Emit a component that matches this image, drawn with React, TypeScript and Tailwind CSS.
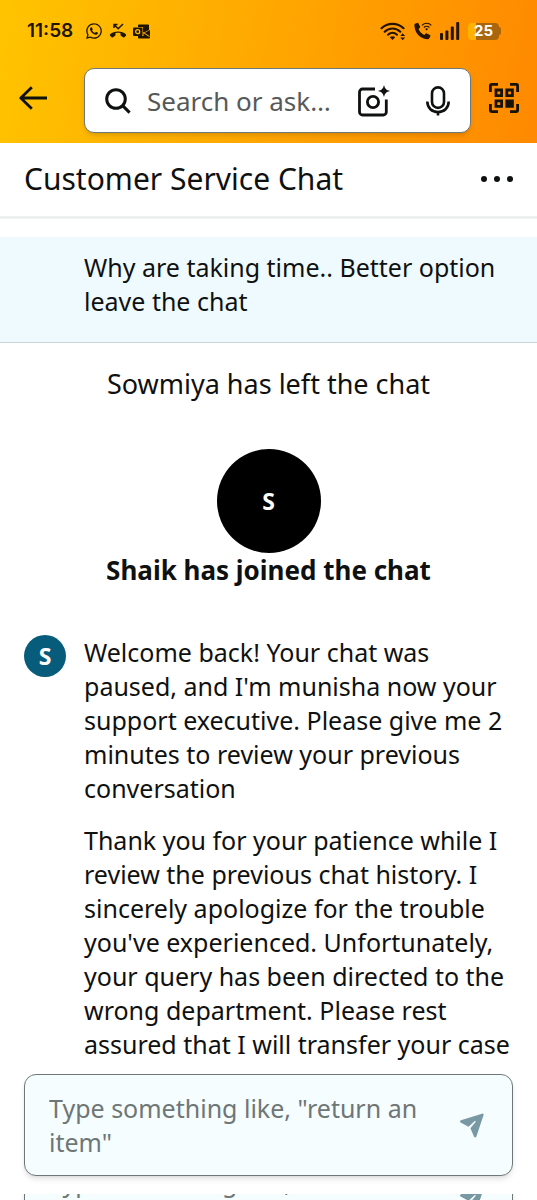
import { useState } from "react";
import { FaWhatsapp } from "react-icons/fa";

const messages = [
  "Welcome back! Your chat was paused, and I'm munisha now your support executive. Please give me 2 minutes to review your previous conversation",
  "Thank you for your patience while I review the previous chat history. I sincerely apologize for the trouble you've experienced. Unfortunately, your query has been directed to the wrong department. Please rest assured that I will transfer your case",
];

const MissedCallIcon = () => (
  <svg width="18" height="16" viewBox="0 0 18 16" fill="none">
    <path
      d="M1.2 11.2C4.8 7.6 13.2 7.6 16.8 11.2c.5.5.5 1 .1 1.5l-1.5 1.5c-.4.4-.9.4-1.3.1l-2.2-1.6c-.3-.3-.4-.6-.4-1V10c-1.6-.5-3.4-.5-5 0v1.7c0 .4-.1.7-.4 1L3.9 14.3c-.4.3-.9.3-1.3-.1L1.1 12.7c-.4-.5-.4-1 .1-1.5Z"
      fill="#201600"
    />
    <path d="M5 5V1.5h3.5M5.2 1.7l4 4L14 1" stroke="#201600" strokeWidth="1.5" />
  </svg>
);

const OutlookIcon = () => (
  <svg width="18" height="15" viewBox="0 0 18 15">
    <path d="M5 1.5C5 1 5.4.5 6 .5h9c.6 0 1 .5 1 1V6l-5 2.5-1-.6V3H5V1.5Z" fill="#201600" />
    <path d="M10.5 9.5 17 6v7.5c0 .6-.4 1-1 1H6c-.6 0-1-.4-1-1V12h5.5V9.5Z" fill="#201600" />
    <path d="m11 9 5.5 3.6" stroke="#ffb900" strokeWidth="1" />
    <rect x="0" y="3.5" width="9.5" height="8.5" rx="1" fill="#201600" />
    <circle cx="4.7" cy="7.7" r="2" fill="none" stroke="#ffb900" strokeWidth="1.3" />
  </svg>
);

const WifiIcon = () => (
  <svg width="26" height="19" viewBox="0 0 26 19" fill="none" stroke="#251500" strokeLinecap="round">
    <path d="M1.5 6.2C7.5.3 17.5.3 23.5 6.2" strokeWidth="2.2" />
    <path d="M4.7 9.7c4.4-4.3 11.2-4.3 15.6 0" strokeWidth="2.2" />
    <path d="M8 12.7c2.7-2.5 6.3-2.5 9 0" strokeWidth="2" />
    <path d="M12.5 18 9.8 15.2c1.5-1.3 3.9-1.3 5.4 0Z" fill="#251500" stroke="none" />
    <path d="m20.3 14 2.4-2.8 2.4 2.8ZM20.3 15.5l2.4 2.8 2.4-2.8Z" fill="#251500" stroke="none" />
  </svg>
);

const WifiCallIcon = () => (
  <svg width="18" height="18" viewBox="0 0 18 18" fill="none">
    <path
      d="M1 1.8 3.2.9c.5-.2 1 0 1.3.5l1.6 3.2c.2.5.1.9-.2 1.2L4.5 7.1c1 2.5 3.1 4.7 5.7 5.9l1.5-1.4c.4-.3.8-.4 1.2-.2l3 1.7c.5.3.6.8.4 1.3l-1.2 2.1c-.3.5-.7.7-1.3.7C6.3 17.1.4 10.8.4 3c0-.6.2-1 .6-1.2Z"
      fill="#251500"
    />
    <path d="M8 3.4c2.6-2.9 6.7-2.9 9.3 0M9.9 5.5c1.5-1.7 4-1.7 5.5 0" stroke="#251500" strokeWidth="1.2" />
    <path d="m12.6 8.6-1.5-1.7c.9-.8 2.1-.8 3 0Z" fill="#251500" />
  </svg>
);

const SignalIcon = () => (
  <svg width="20" height="18" viewBox="0 0 20 18" fill="#251500">
    <rect x="0" y="11" width="3" height="7" rx="1" />
    <rect x="5.4" y="8.5" width="3" height="9.5" rx="1" />
    <rect x="10.8" y="4.5" width="3" height="13.5" rx="1" />
    <rect x="16.2" y="0" width="3" height="18" rx="1" />
  </svg>
);

const BackIcon = () => (
  <svg width="28" height="24" viewBox="0 0 28 24" fill="none" stroke="#0f1111" strokeWidth="2.8">
    <path d="M1.8 12H28M12.8 1.2 1.8 12l11 10.8" strokeLinejoin="round" />
  </svg>
);

const SearchIcon = () => (
  <svg width="26" height="26" viewBox="0 0 26 26" fill="none" stroke="#0f1111" strokeWidth="3">
    <circle cx="11" cy="11" r="9.3" />
    <path d="m17.6 17.6 7 7" />
  </svg>
);

const LensIcon = () => (
  <svg width="32" height="32" viewBox="0 0 32 32" fill="none">
    <path
      d="M17 4H4.5A3 3 0 0 0 1.5 7v20a3 3 0 0 0 3 3h20.8a3 3 0 0 0 3-3V14.500"
      stroke="#0f1111"
      strokeWidth="2.8"
    />
    <circle cx="15" cy="17" r="5.6" stroke="#0f1111" strokeWidth="2.8" />
    <path d="M26 0c1 3.8 2.2 5 6 6-3.8 1-5 2.2-6 6-1-3.8-2.2-5-6-6 3.8-1 5-2.200 6-6Z" fill="#0f1111" />
  </svg>
);

const MicIcon = () => (
  <svg width="24" height="30" viewBox="0 0 24 30" fill="none" stroke="#0f1111" strokeWidth="2.6">
    <rect x="6" y="1.4" width="12" height="20.5" rx="6" />
    <path d="M1.3 15.5C1.3 22 6 26 12 26s10.7-4 10.7-10.5M12 26v3.5" />
  </svg>
);

const ScanIcon = () => (
  <svg width="30" height="30" viewBox="0 0 30 30" fill="none" stroke="#17120a" strokeWidth="2.8">
    <path d="M1.4 9V2.4a1 1 0 0 1 1-1H9M21 1.4h6.6a1 1 0 0 1 1 1V9M28.6 21v6.6a1 1 0 0 1-1 1H21M9 28.6H2.4a1 1 0 0 1-1-1V21" />
    <path d="M7 7h5.6v5.6H7zM17.800 7h5.600v5.600h-5.600zM7 17.800h5.600v5.600H7z" />
    <path d="M17.800 17.800h5.600v5.600h-5.600z" fill="#17120a" />
  </svg>
);

const SendIcon = () => (
  <svg width="24" height="25" viewBox="0 0 24 25">
    <path
      d="M22 .7.9 7.3c-1 .4-1.2 1.6-.3 2.2l7.9 4.3 6.3-5.7c.5-.4 1.2.2.8.8l-5.2 6.3 3.7 8.6c.4.9 1.8.9 2.2-.1L23.5 2.2C23.800 1.200 23 .3 22 .7Z"
      fill="#7898a4"
    />
  </svg>
);

const Composer = ({ id }: { id: string }) => {
  const [text, setText] = useState("");
  return (
    <form
      onSubmit={(e) => e.preventDefault()}
      className="mx-6 flex items-center rounded-xl border border-[#6f7878] bg-[#f5fdff] px-6 py-3 shadow-md"
    >
      <label htmlFor={id} className="sr-only">
        Message
      </label>
      <textarea
        id={id}
        rows={2}
        value={text}
        onChange={(e) => setText(e.target.value)}
        placeholder={'Type something like, "return an item"'}
        className="block min-w-0 flex-1 resize-none overflow-hidden bg-transparent py-1 text-[25px] leading-[34px] text-[#0f1111] outline-none placeholder:text-[#6f7676]"
      />
      <button type="submit" aria-label="Send" className="ml-4 shrink-0 p-1">
        <SendIcon />
      </button>
    </form>
  );
};

const App = () => {
  return (
    <div className="flex h-screen flex-col overflow-hidden bg-white font-['Noto_Sans',sans-serif] text-[25px] leading-[34px] text-[#0f1111]">
      <header className="shrink-0 bg-[linear-gradient(100deg,#ffc400_0%,#ffa700_50%,#ff8900_100%)] pb-[10px]">
        <div className="flex h-[68px] items-center justify-between pr-9 pb-1.5 pl-[27px] text-[#201600]">
          <div className="flex items-center gap-1.5">
            <span className="mr-1.5 font-['Inter',sans-serif] text-[19px] leading-6 font-semibold">11:58</span>
            <FaWhatsapp size={18} />
            <MissedCallIcon />
            <OutlookIcon />
          </div>
          <div className="flex items-center gap-2">
            <WifiIcon />
            <WifiCallIcon />
            <SignalIcon />
            <div className="flex items-center">
              <span className="flex h-[17px] w-[31px] items-center justify-center rounded bg-[linear-gradient(90deg,#ffb300_25%,#a9660c_25%)] font-['Inter',sans-serif] text-[15px] leading-4 font-bold text-white">
                25
              </span>
              <span className="h-2 w-0.5 rounded-r bg-[#a9660c]" />
            </div>
          </div>
        </div>
        <div className="flex items-center pr-[18px] pl-[19px]">
          <button aria-label="Back" className="mr-[37px] shrink-0 pb-1.5">
            <BackIcon />
          </button>
          <div className="flex h-[65px] min-w-0 flex-1 items-center rounded-[10px] border border-[#6f7878] bg-white px-5 shadow-md">
            <SearchIcon />
            <input
              type="text"
              aria-label="Search or ask"
              placeholder="Search or ask…"
              className="ml-4 min-w-0 flex-1 bg-transparent text-[26px] leading-9 outline-none placeholder:text-[#565959]"
            />
            <button aria-label="Search with camera" className="mr-9 shrink-0">
              <LensIcon />
            </button>
            <button aria-label="Voice search" className="shrink-0">
              <MicIcon />
            </button>
          </div>
          <button aria-label="Scan code" className="ml-[18px] shrink-0 pb-1.5">
            <ScanIcon />
          </button>
        </div>
      </header>

      <div className="flex shrink-0 items-center justify-between border-b-3 border-[#eff1f1] px-6 pt-4 pb-[17px]">
        <h1 className="text-[30px] leading-10">Customer Service Chat</h1>
        <button aria-label="More options" className="flex gap-[7px] py-3">
          <span className="size-1.5 rounded-full bg-[#0f1111]" />
          <span className="size-1.5 rounded-full bg-[#0f1111]" />
          <span className="size-1.5 rounded-full bg-[#0f1111]" />
        </button>
      </div>

      <main className="min-h-0 flex-1 overflow-y-auto pt-[18px] [scrollbar-width:none]">
        <div className="border-b border-[#c9d3da] bg-[#effaff] pt-[13px] pr-6 pb-6 pl-[84px]">
          <p>Why are taking time.. Better option leave the chat</p>
        </div>
        <p className="pt-6 text-center text-[27px] leading-[34px]">Sowmiya has left the chat</p>
        <div className="mt-12 flex flex-col items-center">
          <div className="flex size-[104px] items-center justify-center rounded-full bg-black text-[23px] font-bold text-white">
            S
          </div>
          <p className="text-[26px] leading-[34px] font-bold">Shaik has joined the chat</p>
        </div>
        <div className="mt-12 flex items-start gap-[18px] px-6">
          <div className="flex size-[42px] shrink-0 items-center justify-center rounded-full bg-[#075c7c] text-[23px] font-bold text-white">
            S
          </div>
          <div className="flex flex-col gap-[18px]">
            {messages.map((message) => (
              <p key={message}>{message}</p>
            ))}
          </div>
        </div>
      </main>

      <div className="shrink-0">
        <Composer id="message" />
        <div className="mt-[18px] h-1.5 overflow-hidden">
          <div className="-mt-[46px]">
            <Composer id="message-next" />
          </div>
        </div>
      </div>
    </div>
  );
};

export default App;
